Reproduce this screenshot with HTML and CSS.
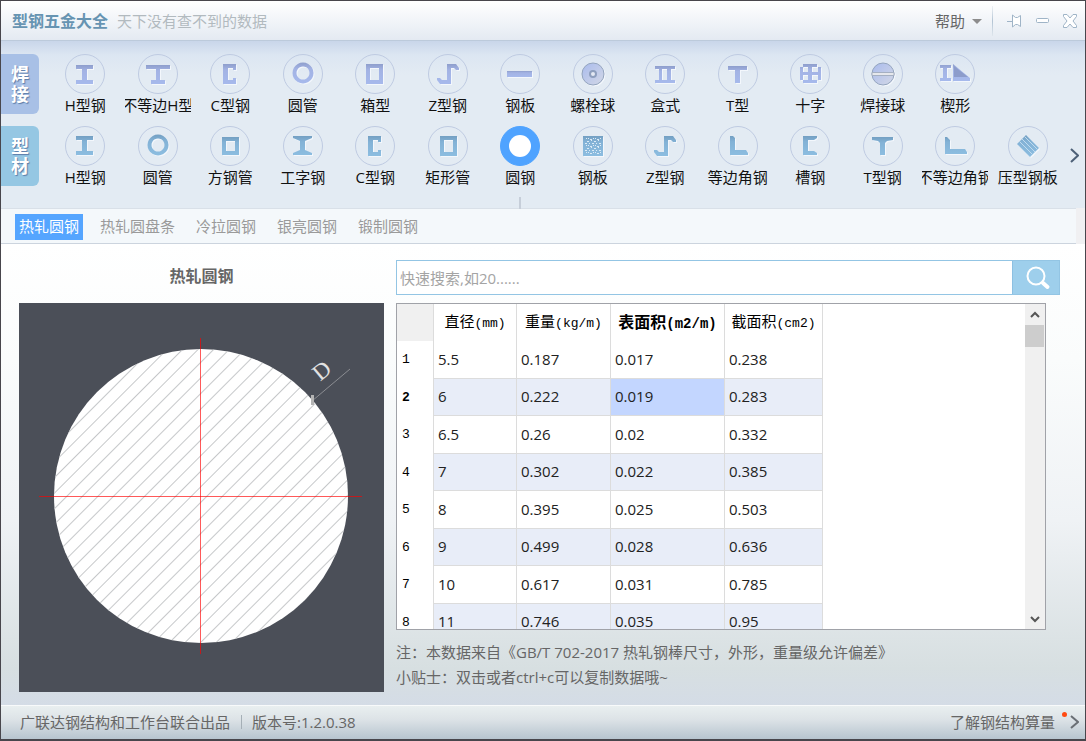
FILE: index.html
```html
<!DOCTYPE html>
<html lang="zh-CN">
<head>
<meta charset="utf-8">
<title>型钢五金大全</title>
<link rel="stylesheet" href="styles.css">
</head>
<body>
<svg class="defs" aria-hidden="true">
  <defs>
    <linearGradient id="weld" x1="0" y1="0" x2="0" y2="1"><stop offset="0" stop-color="#8e9ecc"/><stop offset=".3" stop-color="#a3b3e4"/><stop offset="1" stop-color="#a6b9ec"/></linearGradient>
    <linearGradient id="steel" x1="0" y1="0" x2="0" y2="1"><stop offset="0" stop-color="#739fc2"/><stop offset=".3" stop-color="#83b2d6"/><stop offset="1" stop-color="#8cbde0"/></linearGradient>
    <linearGradient id="ball" x1="0" y1="0" x2="1" y2="1"><stop offset="0" stop-color="#a9bbed"/><stop offset="1" stop-color="#d3d8e6"/></linearGradient>
    <pattern id="dots" width="7" height="7" patternUnits="userSpaceOnUse"><path d="M0 1h2v1h-2zM4 0h1v1h-1zM2 3h1v1h-1zM5 3h2v1h-2zM1 5h1v1h-1zM3 6h2v1h-2zM6 5h1v1h-1z" fill="#dcebf6"/></pattern>
    <pattern id="hatch" width="11" height="11" patternUnits="userSpaceOnUse" patternTransform="rotate(-45)"><path d="M0 5.500H11" stroke="#c6c8ca" stroke-width="1"/></pattern>
  </defs>
</svg>
<div class="window">
  <header class="titlebar">
    <h1 class="app-name">型钢五金大全</h1>
    <span class="slogan">天下没有查不到的数据</span>
    <button class="help" type="button">帮助 <span class="caret"></span></button>
    <span class="title-sep"></span>
    <div class="win-buttons">
      <button type="button" aria-label="置顶"><svg width="16" height="16" viewBox="0 0 16 16"><path d="M1 8.500h5M6.500 2v12l3-2.500h2l3 2V2.500l-3 2h-2z"/></svg></button>
      <button type="button" aria-label="最小化"><svg width="16" height="16" viewBox="0 0 16 16"><rect x="2.500" y="5.500" width="12" height="4" rx="1"/></svg></button>
      <button type="button" aria-label="关闭"><svg width="16" height="16" viewBox="0 0 16 16"><path d="M1.500 1.500h3.500l3 3.500 3-3.500h3.500v2L11 8l3.500 4.500v2H11L8 11l-3 3.500H1.500v-2L5 8 1.500 3.500z"/></svg></button>
    </div>
  </header>

  <nav class="ribbon">
    <div class="ribbon-row">
      <button class="group group-weld" type="button">焊<br>接</button>
      <div class="items weld">
        <button class="item" type="button"><span class="disc"><svg viewBox="0 0 40 40"><path d="M11 11h17v4h-6v11h6v4H11v-4h6V15h-6z"/></svg></span><span class="label">H型钢</span></button>
        <button class="item" type="button"><span class="disc"><svg viewBox="0 0 40 40"><path d="M8 11h24v4H22v11h5v4H13v-4h5V15H8z"/></svg></span><span class="label">不等边H型</span></button>
        <button class="item" type="button"><span class="disc"><svg viewBox="0 0 40 40"><path d="M13 10h13v6h-3v-2h-5v12h5v-2h3v6H13z"/></svg></span><span class="label">C型钢</span></button>
        <button class="item" type="button"><span class="disc"><svg viewBox="0 0 40 40"><path fill-rule="evenodd" d="M20 8.500a10.500 10.500 0 1 0 .01 0zM20 12.500a6.500 6.500 0 1 1-.01 0z"/></svg></span><span class="label">圆管</span></button>
        <button class="item" type="button"><span class="disc"><svg viewBox="0 0 40 40"><path fill-rule="evenodd" d="M11 10h17v20H11zM15 14v12h9V14z"/></svg></span><span class="label">箱型</span></button>
        <button class="item" type="button"><span class="disc"><svg viewBox="0 0 40 40"><path d="M19 10h9l3 4v2h-3l-2-2h-3v16H12l-3-4v-2h3l2 2h5z"/></svg></span><span class="label">Z型钢</span></button>
        <button class="item" type="button"><span class="disc"><svg viewBox="0 0 40 40"><path d="M7 17h25v6H7z"/></svg></span><span class="label">钢板</span></button>
        <button class="item" type="button"><span class="disc"><svg viewBox="0 0 40 40"><circle class="ball" cx="20" cy="20" r="11"/><circle class="ball-hole" cx="20" cy="20" r="3"/></svg></span><span class="label">螺栓球</span></button>
        <button class="item" type="button"><span class="disc"><svg viewBox="0 0 40 40"><path d="M10 12h20v3h-4v11h4v3H10v-3h4V15h-4zM17 15v11h5V15z" fill-rule="evenodd"/></svg></span><span class="label">盒式</span></button>
        <button class="item" type="button"><span class="disc"><svg viewBox="0 0 40 40"><path d="M10 12h19v4h-7v13h-5V16h-7z"/></svg></span><span class="label">T型</span></button>
        <button class="item" type="button"><span class="disc"><svg viewBox="0 0 40 40"><path d="M13 10h14v3h-5v5h6v-5h3v13h-3v-5h-6v5h5v3H13v-3h5v-5h-5v5h-3V13h3v5h5v-5h-5z"/></svg></span><span class="label">十字</span></button>
        <button class="item" type="button"><span class="disc"><svg viewBox="0 0 40 40"><circle class="ball" cx="20" cy="20" r="11"/><path class="band" d="M9 18.500h22v3H9z"/></svg></span><span class="label">焊接球</span></button>
        <button class="item" type="button"><span class="disc"><svg viewBox="0 0 40 40"><path d="M5 11h11v3h-4v10h4v3H5v-3h3V14H5zM18 10l17 14v3H18z"/><path class="crease" d="M19 12v11h14z"/></svg></span><span class="label">楔形</span></button>
      </div>
      <span class="ribbon-end"></span>
    </div>
    <div class="ribbon-row">
      <button class="group group-steel" type="button">型<br>材</button>
      <div class="items steel">
        <button class="item" type="button"><span class="disc"><svg viewBox="0 0 40 40"><path d="M11 10h17v4h-6v11h6v4H11v-4h6V14h-6z"/></svg></span><span class="label">H型钢</span></button>
        <button class="item" type="button"><span class="disc"><svg viewBox="0 0 40 40"><path fill-rule="evenodd" d="M20 8.500a10.500 10.500 0 1 0 .01 0zM20 12.500a6.500 6.500 0 1 1-.01 0z"/></svg></span><span class="label">圆管</span></button>
        <button class="item" type="button"><span class="disc"><svg viewBox="0 0 40 40"><path fill-rule="evenodd" d="M12 11h17v18H12zM16 15v10h9V15z"/></svg></span><span class="label">方钢管</span></button>
        <button class="item" type="button"><span class="disc"><svg viewBox="0 0 40 40"><path d="M10 10h19v2l-7 3v9l7 3v2H10v-2l7-3v-9l-7-3z"/></svg></span><span class="label">工字钢</span></button>
        <button class="item" type="button"><span class="disc"><svg viewBox="0 0 40 40"><path d="M13 10h13v6h-3v-2h-5v12h5v-2h3v6H13z"/></svg></span><span class="label">C型钢</span></button>
        <button class="item" type="button"><span class="disc"><svg viewBox="0 0 40 40"><path fill-rule="evenodd" d="M12 10h17v20H12zM16 14v12h9V14z"/></svg></span><span class="label">矩形管</span></button>
        <button class="item selected" type="button" aria-pressed="true"><span class="disc"><svg viewBox="0 0 40 40"><circle class="solid" cx="20" cy="20" r="11"/></svg></span><span class="label">圆钢</span></button>
        <button class="item" type="button"><span class="disc"><svg viewBox="0 0 40 40"><path d="M10 10h20v20H10z"/><path class="dots" d="M12 12h16v16H12z"/></svg></span><span class="label">钢板</span></button>
        <button class="item" type="button"><span class="disc"><svg viewBox="0 0 40 40"><path d="M19 10h9l3 4v2h-3l-2-2h-3v16H12l-3-4v-2h3l2 2h5z"/></svg></span><span class="label">Z型钢</span></button>
        <button class="item" type="button"><span class="disc"><svg viewBox="0 0 40 40"><path d="M12 10h3l2 2v12h11l2 3v2H12z"/></svg></span><span class="label">等边角钢</span></button>
        <button class="item" type="button"><span class="disc"><svg viewBox="0 0 40 40"><path d="M13 10h14v2l-3 2h-6v11h6l3 2v2H13z"/></svg></span><span class="label">槽钢</span></button>
        <button class="item" type="button"><span class="disc"><svg viewBox="0 0 40 40"><path d="M9 11h21v3l-6 1-2 2v12h-5V17l-2-2-6-1z"/></svg></span><span class="label">T型钢</span></button>
        <button class="item" type="button"><span class="disc"><svg viewBox="0 0 40 40"><path d="M10 11h2l3 3v9h15l2 3v2H10z"/></svg></span><span class="label">不等边角钢</span></button>
        <button class="item" type="button"><span class="disc"><svg viewBox="0 0 40 40"><path d="M9 18l9-9 13 13-9 9z"/><path class="ribs" d="M11.500 15.500l13 13M14 13l13 13M16.500 10.500l13 13"/></svg></span><span class="label">压型钢板</span></button>
      </div>
      <button class="ribbon-end" type="button" aria-label="更多"><svg width="9" height="15" viewBox="0 0 9 15"><path d="M1 1l7 6.500L1 14"/></svg></button>
    </div>
  </nav>

  <div class="tabstrip">
    <div class="tabs">
      <button class="tab active" type="button">热轧圆钢</button>
      <button class="tab" type="button">热轧圆盘条</button>
      <button class="tab" type="button">冷拉圆钢</button>
      <button class="tab" type="button">银亮圆钢</button>
      <button class="tab" type="button">锻制圆钢</button>
    </div>
  </div>

  <main class="content">
    <section class="preview">
      <h2>热轧圆钢</h2>
      <div class="drawing">
        <svg viewBox="0 0 365 389" preserveAspectRatio="xMidYMid meet">
          <circle cx="182" cy="193" r="147" fill="#fff"/>
          <circle cx="182" cy="193" r="147" fill="url(#hatch)"/>
          <path class="axis" d="M181.500 35v316M20 193.500h323"/>
          <path class="leader" d="M293 98L331 66"/>
          <path class="tick" d="M293.500 92v10"/>
          <text class="dim" x="303" y="75" transform="rotate(-40 303 68)">D</text>
        </svg>
      </div>
    </section>

    <section class="data">
      <form class="search">
        <input type="text" placeholder="快速搜索,如20......" aria-label="快速搜索">
        <button type="button" aria-label="搜索"><svg width="26" height="26" viewBox="0 0 26 26"><circle cx="11" cy="11" r="8.500"/><path class="handle" d="M18 18l4.500 4"/></svg></button>
      </form>
      <div class="grid">
        <div class="grid-view">
          <table>
            <colgroup><col class="c-num"><col class="c-dia"><col class="c-wt"><col class="c-sur"><col class="c-sec"></colgroup>
            <thead>
              <tr><td class="corner"></td><th scope="col">直径<span class="unit">(mm)</span></th><th scope="col">重量<span class="unit">(kg/m)</span></th><th scope="col" class="current">表面积<span class="unit">(m2/m)</span></th><th scope="col">截面积<span class="unit">(cm2)</span></th></tr>
            </thead>
            <tbody>
              <tr><th scope="row">1</th><td>5.5</td><td>0.187</td><td>0.017</td><td>0.238</td></tr>
              <tr><th scope="row" class="current">2</th><td>6</td><td>0.222</td><td class="picked">0.019</td><td>0.283</td></tr>
              <tr><th scope="row">3</th><td>6.5</td><td>0.26</td><td>0.02</td><td>0.332</td></tr>
              <tr><th scope="row">4</th><td>7</td><td>0.302</td><td>0.022</td><td>0.385</td></tr>
              <tr><th scope="row">5</th><td>8</td><td>0.395</td><td>0.025</td><td>0.503</td></tr>
              <tr><th scope="row">6</th><td>9</td><td>0.499</td><td>0.028</td><td>0.636</td></tr>
              <tr><th scope="row">7</th><td>10</td><td>0.617</td><td>0.031</td><td>0.785</td></tr>
              <tr><th scope="row">8</th><td>11</td><td>0.746</td><td>0.035</td><td>0.95</td></tr>
            </tbody>
          </table>
        </div>
        <div class="scrollbar">
          <button type="button" aria-label="向上"><svg width="10" height="8" viewBox="0 0 10 8"><path d="M1 6l4-4 4 4"/></svg></button>
          <span class="thumb"></span>
          <button type="button" aria-label="向下"><svg width="10" height="8" viewBox="0 0 10 8"><path d="M1 2l4 4 4-4"/></svg></button>
        </div>
      </div>
      <p class="note">注：本数据来自《GB/T 702-2017 热轧钢棒尺寸，外形，重量级允许偏差》</p>
      <p class="note">小贴士：双击或者ctrl+c可以复制数据哦~</p>
    </section>
  </main>

  <footer class="statusbar">
    <span>广联达钢结构和工作台联合出品</span>
    <span class="status-sep"></span>
    <span>版本号:1.2.0.38</span>
    <a class="more" href="#">了解钢结构算量<span class="dot"></span><svg width="9" height="14" viewBox="0 0 9 14"><path d="M1 1l7 6-7 6"/></svg></a>
  </footer>
</div>
</body>
</html>
```

FILE: styles.css
```css
* {
  box-sizing: border-box;
}

body {
  margin: 0;
  font: 15px/22px "Open Sans", "Noto Sans CJK SC", sans-serif;
  color: #666;
}

button,
input {
  font: inherit;
  color: inherit;
  padding: 0;
  border: 0;
  background: none;
}

svg {
  display: block;
}

.defs {
  position: absolute;
  width: 0;
  height: 0;
}

.window {
  display: flex;
  flex-direction: column;
  height: 100vh;
  min-height: 640px;
  border: 1px solid #48464c;
  border-bottom-width: 2px;
  overflow: hidden;
}

/* title bar */
.titlebar {
  display: flex;
  align-items: center;
  flex: none;
  height: 40px;
  padding: 1px 7px 0 11px;
  border-bottom: 1px solid #bccadb;
  background: linear-gradient(#fff, #e4eaf2);
}

.app-name {
  margin: 0 9px 0 0;
  font-size: 16px;
  font-weight: 700;
  color: #6794b2;
}

.slogan {
  color: #b2babf;
}

.help {
  display: flex;
  align-items: center;
  gap: 7px;
  margin-left: auto;
}

.caret {
  border: 5px solid transparent;
  border-top-color: #8c8c8c;
  border-bottom-width: 0;
}

.title-sep {
  width: 1px;
  height: 30px;
  margin: 0 13px 0 10px;
  background: linear-gradient(#eef1f5, #b3c4d4, #dfe6ed);
}

.win-buttons {
  display: flex;
  gap: 12px;
}

.win-buttons path,
.win-buttons rect {
  fill: #fff;
  stroke: #9fb4c7;
}

/* ribbon */
.ribbon {
  display: flex;
  flex-direction: column;
  flex: none;
  gap: 10px;
  padding: 13px 0 20px;
  background: linear-gradient(#c9d6ea, #dce6f2 14px, #e3ebf3 34px);
}

.ribbon-row {
  display: flex;
}

.group {
  flex: none;
  width: 38px;
  height: 60px;
  border-radius: 0 6px 6px 0;
  font-size: 18px;
  font-weight: 700;
  line-height: 20px;
  color: #fff;
  text-shadow: 1px 1px 1px #5b7ca8;
}

.group-weld {
  background: #a8c0e6;
}

.group-steel {
  background: #95c7e3;
}

.items {
  display: grid;
  grid-template-columns: repeat(14, 1fr);
  flex: 1;
  margin-left: 10px;
}

.item {
  position: relative;
  display: flex;
  flex-direction: column;
  align-items: center;
  color: #111;
}

.disc {
  width: 40px;
  height: 40px;
  border: 1px solid #bfcbe2;
  border-radius: 50%;
}

.disc svg {
  width: 40px;
  height: 40px;
  margin: -1px;
  filter: drop-shadow(1px 1px 0 #f3f7fc);
}

.weld path {
  fill: url(#weld);
}

.steel path {
  fill: url(#steel);
}

.weld .ball {
  fill: url(#ball);
  stroke: #93a4bd;
}

.ball-hole {
  fill: #e4e9f3;
  stroke: #8e9fbe;
  stroke-width: 2;
}

.weld .band {
  fill: #e6e8ec;
  stroke: #a5b0c2;
}

.weld .crease {
  fill: #8c9ccb;
}

.steel .dots {
  fill: url(#dots);
}

.steel .ribs {
  fill: none;
  stroke: #c0dbef;
}

.label {
  display: flex;
  justify-content: center;
  width: 66px;
  overflow: hidden;
  white-space: nowrap;
}

.selected .disc {
  border-color: #4fa3ff;
  background: #4fa3ff;
}

.selected svg {
  filter: none;
}

.solid {
  fill: #fff;
}

.selected::after {
  content: "";
  position: absolute;
  top: 71px;
  width: 2px;
  height: 12px;
  background: #c6ced9;
}

.ribbon-end {
  display: flex;
  align-items: center;
  justify-content: center;
  flex: none;
  width: 21px;
  height: 58px;
}

.ribbon-end path {
  fill: none;
  stroke: #4d6077;
  stroke-width: 2;
}

/* tabs */
.tabstrip {
  flex: none;
  padding-right: 9px;
  background: #f0f0f2;
}

.tabs {
  display: flex;
  gap: 13px;
  padding: 5px 14px 3px;
  border-top: 1px solid #d9e0e8;
  border-bottom: 1px solid #ccd4de;
  background: #f4f8fb;
}

.tab {
  padding: 1px 4px 3px;
  color: #9a9a9a;
}

.tab.active {
  background: #55a5ff;
  color: #fff;
}

/* content */
.content {
  display: grid;
  grid-template-columns: 365px 1fr;
  gap: 12px;
  flex: 1;
  min-height: 0;
  padding: 16px 25px 13px 18px;
  background: linear-gradient(#fff, #fafcfc 25%, #eff2f5 60%, #d7dfe1 92%, #d4dce6);
}

.preview,
.data {
  display: flex;
  flex-direction: column;
  min-height: 0;
}

.preview h2 {
  margin: 5px 0 16px;
  font-size: 16px;
  font-weight: 700;
  text-align: center;
}

.drawing {
  flex: 1;
  min-height: 0;
  background: #4b4f58;
}

.drawing svg {
  width: 100%;
  height: 100%;
}

.axis {
  fill: none;
  stroke: #ff0000;
  stroke-opacity: .65;
}

.leader {
  stroke: #8b8d92;
}

.tick {
  stroke: #b4b4b4;
  stroke-width: 3;
}

.dim {
  font: 23px "Liberation Serif", serif;
  fill: #e2e2e2;
  text-anchor: middle;
}

.search {
  display: flex;
  flex: none;
  height: 35px;
  border: 1px solid #93c5e4;
}

.search input {
  flex: 1;
  min-width: 0;
  padding: 0 3px;
  background: #fff;
}

.search input::placeholder {
  color: #a4a4a4;
}

.search button {
  display: flex;
  align-items: center;
  justify-content: center;
  width: 47px;
  padding-left: 3px;
  border-left: 1px solid #8cc0e2;
  background: #9ecfec;
}

.search circle {
  fill: none;
  stroke: #fff;
  stroke-width: 2;
}

.search .handle {
  stroke: #fff;
  stroke-width: 4;
  stroke-linecap: round;
}

.grid {
  display: flex;
  flex: 1;
  min-height: 0;
  margin: 8px 14px 10px 0;
  border: 1px solid #a0a2a8;
  background: #fff;
}

.grid-view {
  flex: 1;
  overflow: hidden;
}

table {
  table-layout: fixed;
  width: 426px;
  border-spacing: 0;
  color: #222;
}

.c-num { width: 37px; }
.c-dia { width: 83px; }
.c-wt  { width: 94px; }
.c-sur { width: 114px; }
.c-sec { width: 98px; }

th,
td {
  height: 38px;
  padding: 0 5px;
  border-right: 1px solid #dcdcdc;
  text-align: left;
  font-weight: 400;
}

thead tr > * {
  height: 37px;
}

tbody tr:nth-child(even) > * {
  height: 37px;
}

tbody td {
  padding: 0 4px 2px;
  border-bottom: 1px solid #dcdcdc;
}

tbody tr:nth-child(even) td {
  background: #e8edf8;
}

tbody tr td.picked {
  background: #c3d6ff;
}

thead th {
  padding: 0;
  text-align: center;
  white-space: nowrap;
  color: #000;
}

.unit {
  font-family: "Liberation Mono", monospace;
  font-size: 13px;
}

thead .current {
  font-size: 16px;
  font-weight: 700;
}

.current .unit {
  font-size: 14px;
}

.corner {
  background: #f0f0f0;
}

tbody th {
  font-family: "Liberation Mono", monospace;
  font-size: 13px;
  color: #000;
}

tbody .current {
  font-weight: 700;
}

.scrollbar {
  display: flex;
  flex-direction: column;
  flex: none;
  width: 20px;
  padding-right: 1px;
  background: #f0f0f0;
}

.scrollbar button {
  display: flex;
  align-items: center;
  justify-content: center;
  height: 21px;
}

.scrollbar button:last-child {
  margin-top: auto;
}

.scrollbar path {
  fill: none;
  stroke: #555;
  stroke-width: 2;
}

.thumb {
  height: 22px;
  background: #cdcdcd;
}

.note {
  flex: none;
  margin: 0;
  line-height: 25px;
}

.note:last-child {
  margin-bottom: 2px;
}

/* status bar */
.statusbar {
  display: flex;
  align-items: center;
  flex: none;
  height: 34px;
  padding: 0 6px 2px 19px;
  border-top: 1px solid #f8fafb;
  background: linear-gradient(#e9eff0, #dde3e7 40%, #b7c5cf);
}

.status-sep {
  width: 1px;
  height: 14px;
  margin: 0 10px 0 11px;
  background: #a5afb6;
}

.more {
  display: flex;
  align-items: center;
  margin-left: auto;
  color: inherit;
  text-decoration: none;
}

.dot {
  width: 5px;
  height: 5px;
  margin: 0 3px 14px 7px;
  border-radius: 50%;
  background: #ff4a12;
}

.more path {
  fill: none;
  stroke: #6a6f75;
  stroke-width: 2;
}
```
